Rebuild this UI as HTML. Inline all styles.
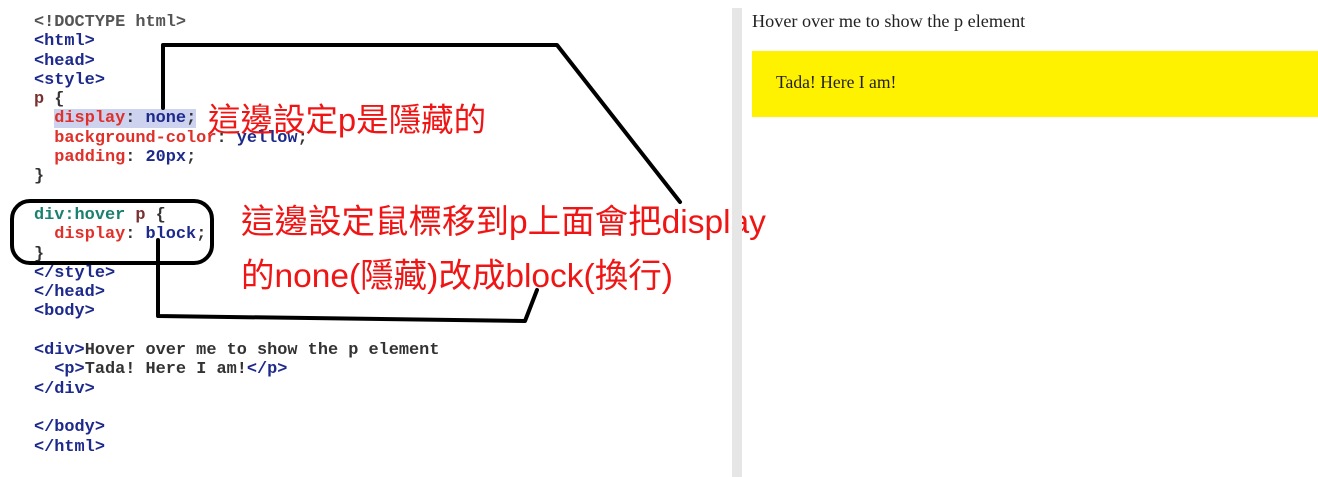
<!DOCTYPE html>
<html><head><style>
body{margin:0;width:1318px;height:477px;background:#fff;position:relative;overflow:hidden}
pre{position:absolute;left:34px;top:13px;margin:0;font-family:"Liberation Mono",monospace;font-size:16.9px;line-height:19.3px;color:#333;font-weight:bold}
.t{color:#1d2a8c}.a{color:#e0302a}.v{color:#1d2a8c}.s{color:#1a8070}
.hl{background:#cdd2ee}
.cn{position:absolute;color:#f01515;font-family:"Liberation Sans","Noto Sans CJK TC",sans-serif;white-space:nowrap}
.div{position:absolute;left:732px;top:8px;width:10px;height:469px;background:#e6e6e6}
.r{position:absolute;font-family:"Liberation Serif",serif;color:#222}
</style></head><body>
<pre><span style="color:#555">&lt;!DOCTYPE html&gt;</span>
<span class="t">&lt;html&gt;</span>
<span class="t">&lt;head&gt;</span>
<span class="t">&lt;style&gt;</span>
<span style="color:#7a3030">p</span> {
  <span class="hl"><span class="a">display</span>: <span class="v">none</span>;</span>
  <span class="a">background-color</span>: <span class="v">yellow</span>;
  <span class="a">padding</span>: <span class="v">20px</span>;
}

<span class="s">div:hover</span> <span style="color:#7a3030">p</span> {
  <span class="a">display</span>: <span class="v">block</span>;
}
<span class="t">&lt;/style&gt;</span>
<span class="t">&lt;/head&gt;</span>
<span class="t">&lt;body&gt;</span>

<span class="t">&lt;div&gt;</span>Hover over me to show the p element
  <span class="t">&lt;p&gt;</span>Tada! Here I am!<span class="t">&lt;/p&gt;</span>
<span class="t">&lt;/div&gt;</span>

<span class="t">&lt;/body&gt;</span>
<span class="t">&lt;/html&gt;</span></pre>
<div class="cn" style="left:208px;top:94px;font-size:32.5px">這邊設定p是隱藏的</div>
<div class="cn" style="left:241px;top:194px;font-size:33.5px">這邊設定鼠標移到p上面會把display</div>
<div class="cn" style="left:241px;top:248px;font-size:33.5px">的none(隱藏)改成block(換行)</div>
<svg style="position:absolute;left:0;top:0" width="1318" height="477">
<g fill="none" stroke="#000" stroke-width="4" stroke-linejoin="round" stroke-linecap="round">
<polyline points="163,108 163,45 557,45 680,202"/>
<rect x="12" y="201" width="200" height="62" rx="18"/>
<polyline points="158,240 158,316 525,321 537,290"/>
</g></svg>
<div class="div"></div>
<div class="r" style="left:752px;top:11px;font-size:18.2px">Hover over me to show the p element</div>
<div style="position:absolute;left:752px;top:51px;width:566px;height:66px;background:#fff200"></div>
<div class="r" style="left:776px;top:72px;font-size:17.6px">Tada! Here I am!</div>
</body></html>
